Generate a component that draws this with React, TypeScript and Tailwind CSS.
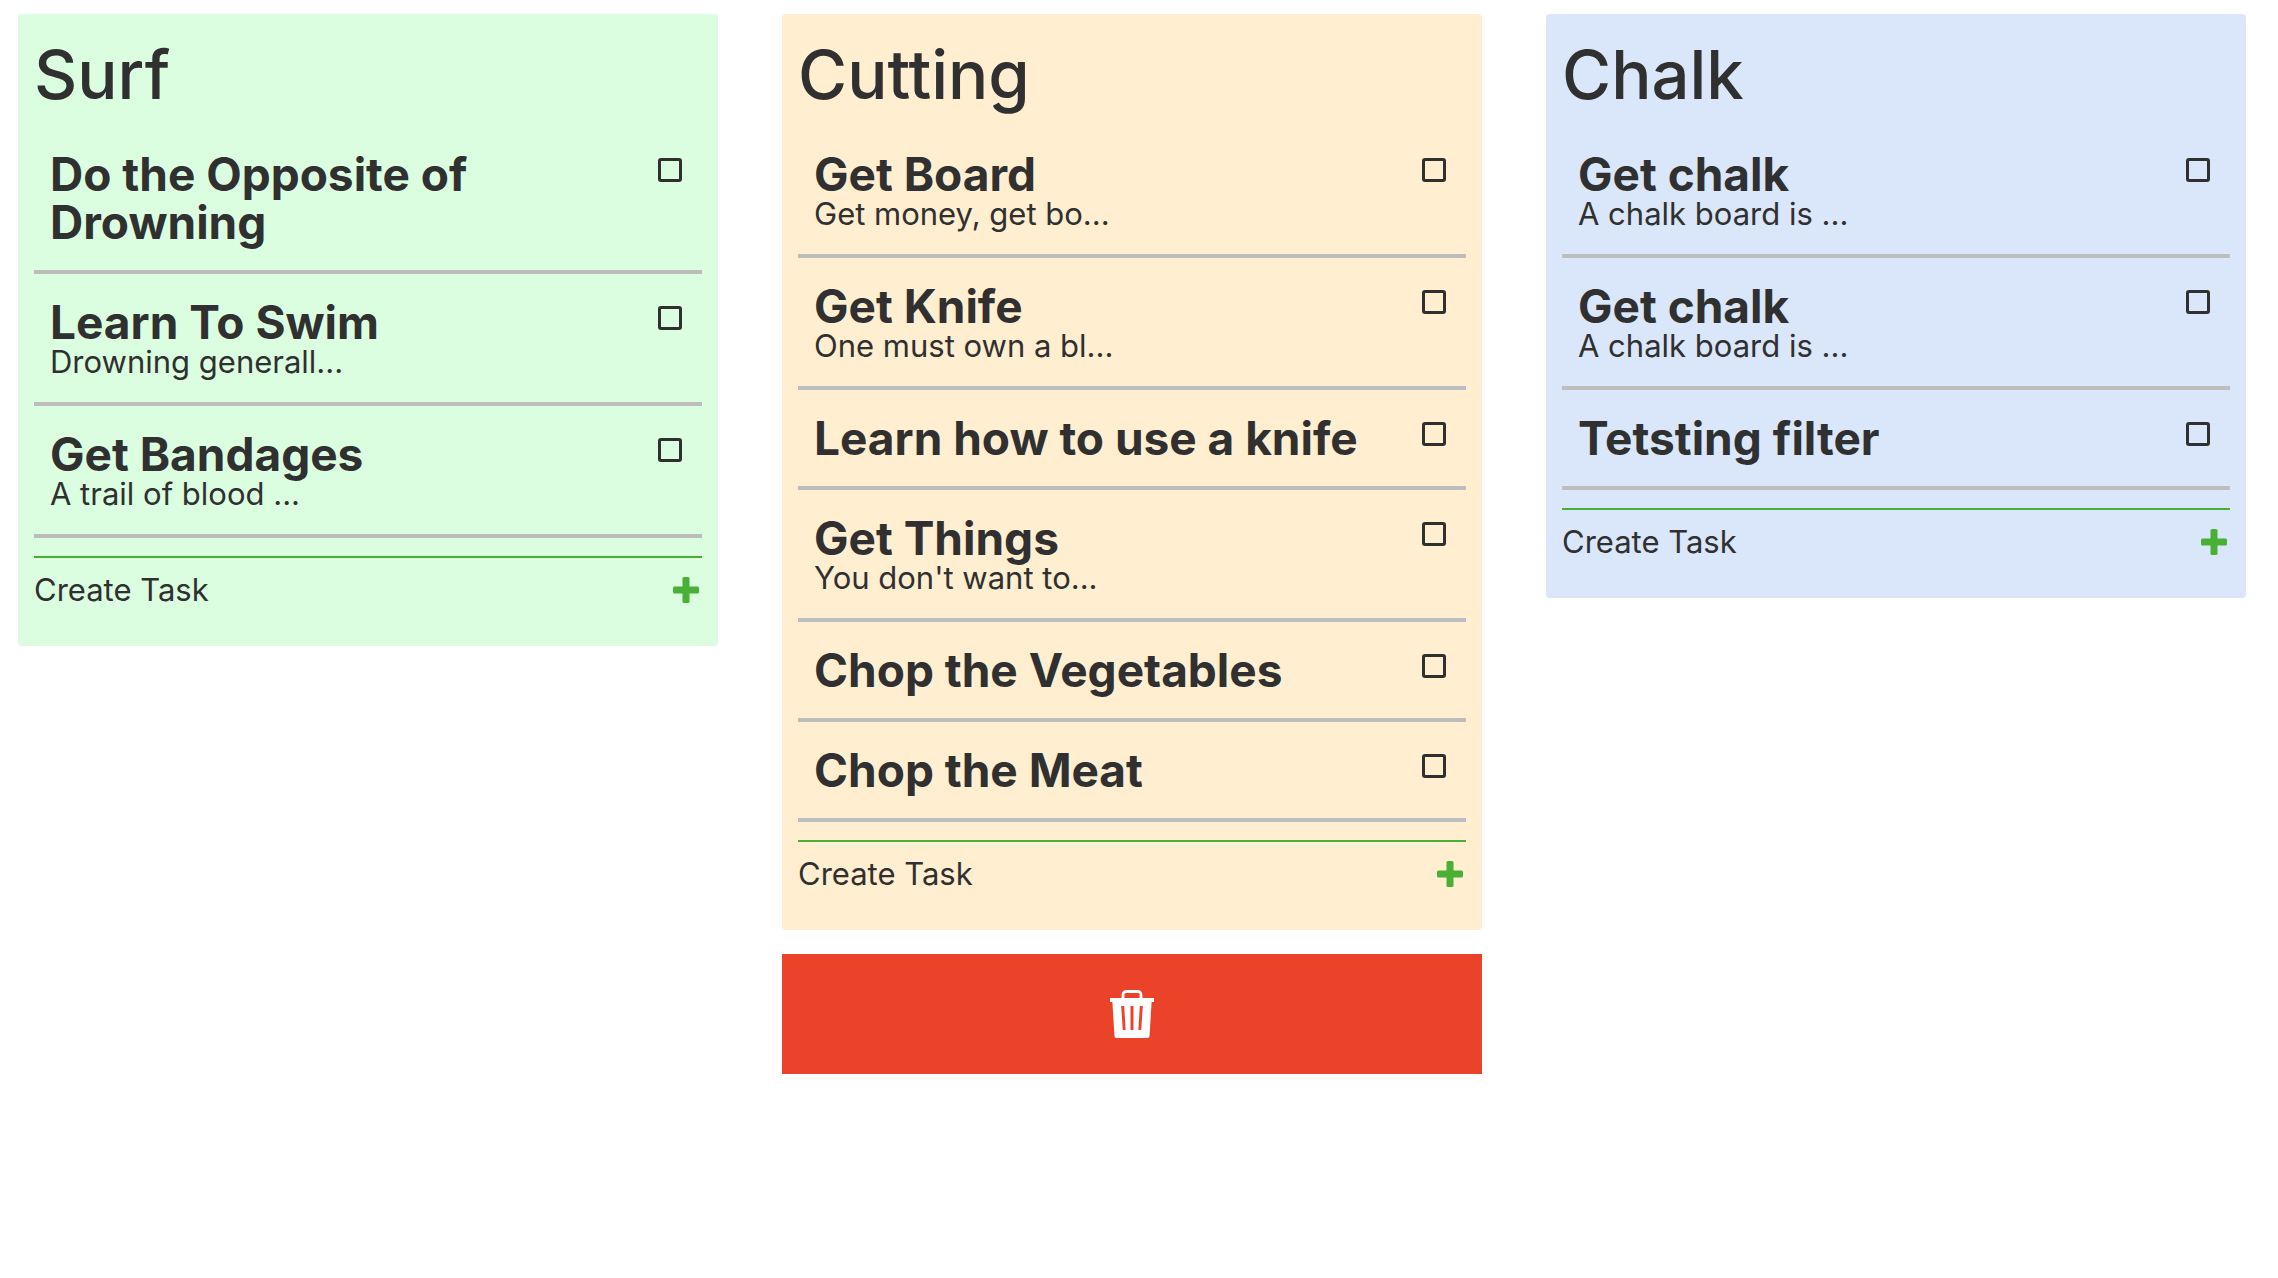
type Task = { title: string; text?: string }
type List = { name: string; color: string; tasks: Task[] }

const lists: List[] = [
  {
    name: "Surf",
    color: "bg-[#dbfee1]",
    tasks: [
      { title: "Do the Opposite of Drowning" },
      { title: "Learn To Swim", text: "Drowning generall..." },
      { title: "Get Bandages", text: "A trail of blood ..." },
    ],
  },
  {
    name: "Cutting",
    color: "bg-[#ffeed0]",
    tasks: [
      { title: "Get Board", text: "Get money, get bo..." },
      { title: "Get Knife", text: "One must own a bl..." },
      { title: "Learn how to use a knife" },
      { title: "Get Things", text: "You don't want to..." },
      { title: "Chop the Vegetables" },
      { title: "Chop the Meat" },
    ],
  },
  {
    name: "Chalk",
    color: "bg-[#dae6fa]",
    tasks: [
      { title: "Get chalk", text: "A chalk board is ..." },
      { title: "Get chalk", text: "A chalk board is ..." },
      { title: "Tetsting filter" },
    ],
  },
]

const PlusIcon = () => (
  <svg width="26" height="26" viewBox="0 0 26 26" fill="#49b035">
    <rect x="9.5" width="7" height="26" rx="1.5" />
    <rect y="9.5" width="26" height="7" rx="1.5" />
  </svg>
)

const TrashIcon = () => (
  <svg width="44" height="48" viewBox="0 0 44 48" fill="none">
    <path
      d="M13 9V4.5a3 3 0 0 1 3-3h12a3 3 0 0 1 3 3V9"
      stroke="currentColor"
      strokeWidth="2.8"
    />
    <path
      fill="currentColor"
      fillRule="evenodd"
      d="M0 8h44v4h-2.4l-2.1 34a2 2 0 0 1-2 2h-31a2 2 0 0 1-2-2L2.4 12H0zM11.2 16l1.6 24h2.8L14.2 16zM20.5 16v24h3V16zM29.8 16l-1.4 24h2.8l1.6-24z"
    />
  </svg>
)

const TaskRow = ({ task, id }: { task: Task; id: string }) => {
  return (
    <li className="flex items-start justify-between border-b-4 border-[#bdbdbd] py-6 pr-5 pl-4">
      <label htmlFor={id} className="max-w-[560px]">
        <h2 className="text-[46px] leading-[48px] font-bold">{task.title}</h2>
        {task.text && (
          <p className="text-[31px] leading-[32px]">{task.text}</p>
        )}
      </label>
      <input
        type="checkbox"
        id={id}
        className="mt-2 size-6 shrink-0 appearance-none rounded-[3px] border-3 border-[#303030]"
      />
    </li>
  )
}

const TaskList = ({ list }: { list: List }) => {
  return (
    <section className={`rounded px-4 pt-5 pb-9 ${list.color}`}>
      <h1 className="mb-[10px] text-[67px] leading-[82px] font-medium">
        {list.name}
      </h1>
      <ul>
        {list.tasks.map((task, idx) => (
          <TaskRow key={idx} task={task} id={`${list.name}-${idx}`} />
        ))}
      </ul>
      <button
        type="button"
        className="mt-[18px] flex w-full items-center justify-between border-t-2 border-[#49b035] pt-3 pr-[3px] text-[31px] leading-[40px]"
      >
        Create Task
        <PlusIcon />
      </button>
    </section>
  )
}

const App = () => {
  return (
    <main className="grid grid-cols-3 items-start gap-16 pt-[14px] pr-8 pl-[18px] font-['Inter',sans-serif] text-[#303030]">
      {lists.map((list) => (
        <div key={list.name}>
          <TaskList list={list} />
          {list.name === "Cutting" && (
            <button
              type="button"
              aria-label="Delete"
              className="mt-6 flex h-[120px] w-full items-center justify-center bg-[#eb422a] text-white"
            >
              <TrashIcon />
            </button>
          )}
        </div>
      ))}
    </main>
  )
}

export default App
